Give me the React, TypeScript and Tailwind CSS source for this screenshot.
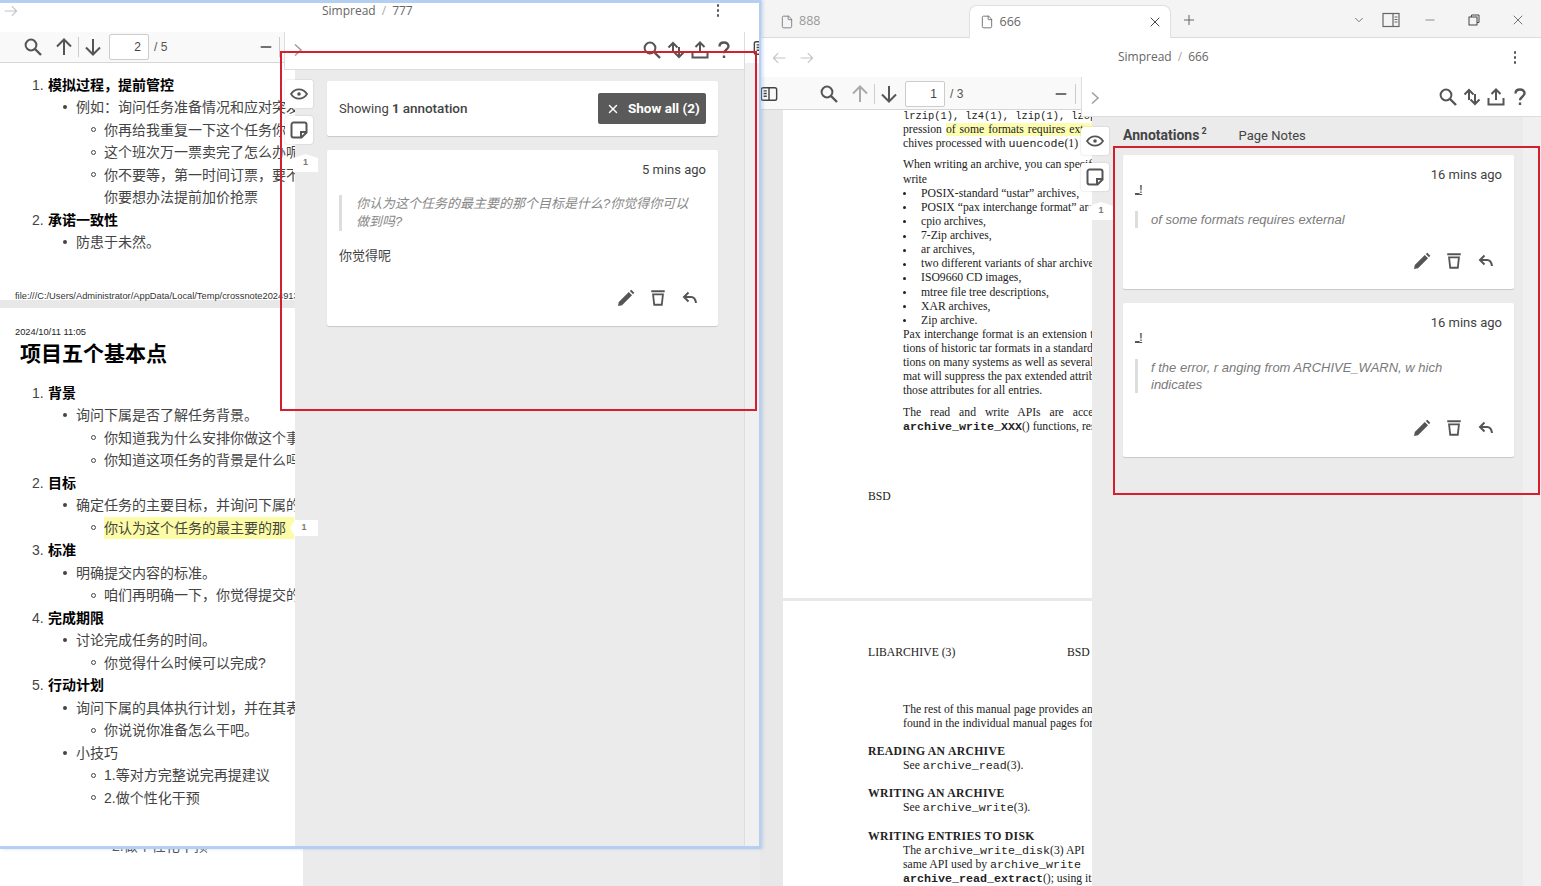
import { ChevronDown, File, Minus, Plus, X } from "lucide-react";

const cjk = "font-['Liberation_Sans','Noto_Sans_CJK_SC',sans-serif]";

function Glyph({ size = 20, color = "#555", width = 2, children }: { size?: number; color?: string; width?: number; children: React.ReactNode }) {
  return (
    <svg width={size} height={size} viewBox="0 0 20 20" fill="none" stroke={color} strokeWidth={width} className="shrink-0">
      {children}
    </svg>
  );
}

const SearchIcon = () => (
  <Glyph>
    <circle cx="8" cy="8" r="5.4" />
    <path d="M12 12l6 6" strokeWidth="2.4" />
  </Glyph>
);
const UpIcon = ({ color = "#555" }: { color?: string }) => (
  <Glyph color={color}>
    <path d="M10 18V3M3 9.5L10 2.5l7 7" />
  </Glyph>
);
const DownIcon = () => (
  <Glyph>
    <path d="M10 2v15M3 10.5l7 7 7-7" />
  </Glyph>
);
const SortIcon = () => (
  <Glyph>
    <path d="M7 13V3M2.5 7.5L7 3l4.5 4.5M13 7v10M8.5 12.5L13 17l4.5-4.5" />
  </Glyph>
);
const ShareIcon = () => (
  <Glyph>
    <path d="M10 13V3M5.5 7L10 2.5 14.500 7M2.500 11v6.500h15V11" />
  </Glyph>
);
const HelpIcon = () => (
  <Glyph width={2.4}>
    <path d="M5.500 6.500c0-2.700 2-4 4.500-4s4.500 1.400 4.500 3.800c0 3.400-4.500 3.400-4.500 7" />
    <path d="M10 15.500v2.500" />
  </Glyph>
);
const EyeIcon = () => (
  <Glyph width={1.8}>
    <path d="M2 10c2-3 4.700-4.700 8-4.700s6 1.700 8 4.700c-2 3-4.700 4.700-8 4.700S4 13 2 10z" />
    <circle cx="10" cy="10" r="1.800" fill="#555" stroke="none" />
  </Glyph>
);
const NoteIcon = () => (
  <Glyph width={2}>
    <path d="M2.500 4.500a2 2 0 012-2h11a2 2 0 012 2v8l-5 5h-8a2 2 0 01-2-2z" />
    <path d="M17.500 12h-5.500v5.500" />
  </Glyph>
);
const PanelIcon = () => (
  <Glyph size={18} color="#444" width={1.6}>
    <rect x="1.500" y="3" width="17" height="14" rx="2" />
    <path d="M10 3v14M4 6.500h3.500M4 9.500h3.500M4 12.500h3.500" />
  </Glyph>
);
const PencilIcon = () => (
  <svg width="18" height="18" viewBox="0 0 18 18" fill="#555" className="shrink-0">
    <path d="M1 17l.8-4L11.800 3l3.200 3.200-10 10zM12.800 2l1.500-1.300 3 3L16 5.200z" />
  </svg>
);
const TrashIcon = () => (
  <Glyph size={18} width={2}>
    <path d="M2.500 2.500h15" strokeWidth="2.200" />
    <path d="M4.500 6h11l-1.300 11.500H5.800z" />
  </Glyph>
);
const ReplyIcon = () => (
  <svg width="16" height="16" viewBox="0 0 16 16" fill="none" stroke="#555" strokeWidth="2" className="shrink-0">
    <path d="M6.500 2.500L2 7l4.500 4.500M2.500 7H9c3 0 4.500 2 5 6" />
  </svg>
);
const ArrowRight = ({ color = "#c4c4c4" }: { color?: string }) => (
  <Glyph size={16} color={color} width={1.400}>
    <path d="M2 10h15M11 4l6 6-6 6" />
  </Glyph>
);
const ArrowLeft = () => (
  <Glyph size={16} color="#c4c4c4" width={1.400}>
    <path d="M18 10H3M9 4l-6 6 6 6" />
  </Glyph>
);
const Dots = () => (
  <div className="flex flex-col gap-[2.500px]">
    <i className="size-[2.500px] rounded-full bg-[#555]" />
    <i className="size-[2.500px] rounded-full bg-[#555]" />
    <i className="size-[2.500px] rounded-full bg-[#555]" />
  </div>
);
const Chevron = () => (
  <svg width="10" height="14" viewBox="0 0 10 14" fill="none" stroke="#a0a0a0" strokeWidth="1.600">
    <path d="M2 1.500L8 7l-6 5.500" />
  </svg>
);

function Crumb({ name }: { name: string }) {
  return (
    <span className="block font-['Open_Sans',sans-serif] text-[12px] leading-[14px] text-[#666]">
      Simpread<span className="mx-[6px] text-[#aaa]">/</span>
      {name}
    </span>
  );
}

function PanelTools() {
  return (
    <div className="flex items-center gap-[4px]">
      <SearchIcon />
      <SortIcon />
      <ShareIcon />
      <HelpIcon />
    </div>
  );
}

function PageTools({ page, total, upColor }: { page: string; total: string; upColor?: string }) {
  return (
    <div className="flex items-center">
      <SearchIcon />
      <div className="ml-[11px]">
        <UpIcon color={upColor} />
      </div>
      <div className="mx-[4px] h-[20px] w-px bg-[#ccc]" />
      <DownIcon />
      <div className="ml-[6px] flex h-[26px] w-[40px] items-center justify-end rounded-[2px] border border-[#ccc] bg-white pr-[7px] font-['Liberation_Sans',sans-serif] text-[12px] text-[#444]">
        {page}
      </div>
      <span className="ml-[5px] font-['Liberation_Sans',sans-serif] text-[12px] text-[#555]">/ {total}</span>
    </div>
  );
}

function SideButtons({ tagTop }: { tagTop: string }) {
  return (
    <>
      <div className="flex size-[28px] items-center justify-center rounded-l-[3px] rounded-r-[2px] bg-white shadow-[0_0_2px_rgba(0,0,0,0.2)]">
        <EyeIcon />
      </div>
      <div className={`${tagTop} flex size-[28px] items-center justify-center rounded-[3px] bg-white shadow-[0_0_2px_rgba(0,0,0,0.2)]`}>
        <NoteIcon />
      </div>
    </>
  );
}

function Tag({ className, shape }: { className: string; shape: string }) {
  return (
    <div className={`absolute flex items-center justify-center bg-white font-['Liberation_Sans',sans-serif] text-[9px] font-bold text-[#777] ${shape} ${className}`}>1</div>
  );
}

function Actions() {
  return (
    <div className="flex items-center justify-end pr-[8px]">
      <PencilIcon />
      <div className="ml-[14px] mr-[15px]">
        <TrashIcon />
      </div>
      <ReplyIcon />
    </div>
  );
}

function NoteCard({ time, quote, className, actionsGap }: { time: string; quote: string[]; className: string; actionsGap: string }) {
  return (
    <div className={`rounded-[2px] bg-white px-[12px] pt-[12px] font-['Roboto',sans-serif] shadow-[0_1px_1px_rgba(0,0,0,0.15)] ${className}`}>
      <div className="text-right text-[13px] leading-[16px] text-[#3f3f3f]">{time}</div>
      <div className="mt-[1px] h-[12px] pt-[1px] text-[10px] leading-[10px] font-bold text-[#555] underline">_!</div>
      <div className="mt-[15px] border-l-[3px] border-[#ddd] pl-[13px] font-['Liberation_Sans',sans-serif] text-[13px] leading-[17px] text-[#7a7a7a] italic">
        {quote.map((line) => (
          <div key={line}>{line}</div>
        ))}
      </div>
      <div className={actionsGap}>
        <Actions />
      </div>
    </div>
  );
}

type Row = { l: number; t: string; n?: string; mark?: string };

const page1: Row[] = [
  { l: 0, n: "1.", t: "模拟过程，提前管控" },
  { l: 1, t: "例如：询问任务准备情况和应对突发状况" },
  { l: 2, t: "你再给我重复一下这个任务你打算怎么做" },
  { l: 2, t: "这个班次万一票卖完了怎么办呢" },
  { l: 2, t: "你不要等，第一时间订票，要不然" },
  { l: 3, t: "你要想办法提前加价抢票" },
  { l: 0, n: "2.", t: "承诺一致性" },
  { l: 1, t: "防患于未然。" },
];

const page2: Row[] = [
  { l: 0, n: "1.", t: "背景" },
  { l: 1, t: "询问下属是否了解任务背景。" },
  { l: 2, t: "你知道我为什么安排你做这个事吗" },
  { l: 2, t: "你知道这项任务的背景是什么吗" },
  { l: 0, n: "2.", t: "目标" },
  { l: 1, t: "确定任务的主要目标，并询问下属的" },
  { l: 2, t: "", mark: "你认为这个任务的最主要的那" },
  { l: 0, n: "3.", t: "标准" },
  { l: 1, t: "明确提交内容的标准。" },
  { l: 2, t: "咱们再明确一下，你觉得提交的" },
  { l: 0, n: "4.", t: "完成期限" },
  { l: 1, t: "讨论完成任务的时间。" },
  { l: 2, t: "你觉得什么时候可以完成?" },
  { l: 0, n: "5.", t: "行动计划" },
  { l: 1, t: "询问下属的具体执行计划，并在其表" },
  { l: 2, t: "你说说你准备怎么干吧。" },
  { l: 1, t: "小技巧" },
  { l: 2, t: "1.等对方完整说完再提建议" },
  { l: 2, t: "2.做个性化干预" },
];

function Outline({ rows }: { rows: Row[] }) {
  return (
    <div className={`${cjk} whitespace-nowrap text-[14px] leading-[22.500px] text-[#444]`}>
      {rows.map((r, i) => {
        if (r.l === 0)
          return (
            <div key={i} className="flex pl-[32px]">
              <span className="w-[16px] shrink-0">{r.n}</span>
              <b className="font-bold text-black">{r.t}</b>
            </div>
          );
        if (r.l === 1)
          return (
            <div key={i} className="flex items-center pl-[62.500px]">
              <i className="mr-[9.500px] size-[4px] shrink-0 rounded-full bg-[#444]" />
              {r.t}
            </div>
          );
        if (r.l === 3)
          return (
            <div key={i} className="pl-[104px]">
              {r.t}
            </div>
          );
        return (
          <div key={i} className="flex items-center pl-[90.500px]">
            <i className="mr-[8.500px] size-[5px] shrink-0 rounded-full border border-[#444]" />
            {r.mark ? <mark className="bg-[#fcfca6] pr-[8px] text-[#444]">{r.mark}</mark> : r.t}
          </div>
        );
      })}
    </div>
  );
}

const serif = "font-['Liberation_Serif',serif] text-[#222] text-[11.700px] leading-[14.130px] whitespace-nowrap";
const mono = "font-['Liberation_Mono',monospace] text-[11.670px]";

const formats = [
  "POSIX-standard “ustar” archives,",
  "POSIX “pax interchange format” archives,",
  "cpio archives,",
  "7-Zip archives,",
  "ar archives,",
  "two different variants of shar archives,",
  "ISO9660 CD images,",
  "mtree file tree descriptions,",
  "XAR archives,",
  "Zip archive.",
];

function ManPages() {
  return (
    <div className="flex w-[332px] shrink-0 flex-col overflow-hidden bg-[#e8e8e8] pl-[23px]">
      <div className={`${serif} h-[488px] bg-white pl-[120px]`}>
        <div className="-mt-px font-['Liberation_Mono',monospace] text-[10.400px]">
          lrzip(1), lz4(1), lzip(1), lzop(1),
        </div>
        <div className="[word-spacing:1px]">
          pression <mark className="bg-[#fdfdb0] pr-[60px] text-[#222]">of some formats requires external</mark>
        </div>
        <div>
          chives processed with <span className={mono}>uuencode</span>(1) filter.
        </div>
        <div className="mt-[7px]">When writing an archive, you can specify</div>
        <div>write</div>
        {formats.map((f) => (
          <div key={f} className="flex items-center">
            <i className="mr-[15px] size-[3px] shrink-0 rounded-full bg-[#222]" />
            {f}
          </div>
        ))}
        <div className="[word-spacing:0.5px]">Pax interchange format is an extension to the</div>
        <div>tions of historic tar formats in a standard way</div>
        <div>tions on many systems as well as several new</div>
        <div>mat will suppress the pax extended attributes</div>
        <div>those attributes for all entries.</div>
        <div className="mt-[7px] [word-spacing:6px]">The read and write APIs are accessed</div>
        <div>
          <b className={`${mono} font-bold`}>archive_write_XXX</b>() functions, respectively
        </div>
        <div className="-ml-[35px] mt-[56px]">BSD</div>
      </div>
      <div className={`${serif} mt-[3px] flex-1 bg-white pl-[85px] pt-[45px]`}>
        <div className="flex">
          <span className="w-[199px] shrink-0">LIBARCHIVE (3)</span>
          <span>BSD</span>
        </div>
        <div className="mt-[43px] pl-[35px]">
          <div>The rest of this manual page provides an overview</div>
          <div>found in the individual manual pages for each</div>
        </div>
        <b className="mt-[14px] block tracking-[0.3px]">READING AN ARCHIVE</b>
        <div className="pl-[35px]">
          See <span className={mono}>archive_read</span>(3).
        </div>
        <b className="mt-[14px] block tracking-[0.3px]">WRITING AN ARCHIVE</b>
        <div className="pl-[35px]">
          See <span className={mono}>archive_write</span>(3).
        </div>
        <b className="mt-[14px] block tracking-[0.3px]">WRITING ENTRIES TO DISK</b>
        <div className="pl-[35px]">
          <div>
            The <span className={mono}>archive_write_disk</span>(3) API
          </div>
          <div>
            same API used by <span className={mono}>archive_write</span>
          </div>
          <div>
            <b className={`${mono} font-bold`}>archive_read_extract</b>(); using it
          </div>
        </div>
      </div>
    </div>
  );
}

function LeftWindow() {
  return (
    <div className="absolute left-0 top-0 z-20 flex h-[849px] w-[761px] flex-col overflow-hidden border-y-[3px] border-r-2 border-[#b4cff2] bg-white shadow-[2px_0_3px_rgba(120,160,220,0.35)]">
      <div className="flex h-[29px] shrink-0 items-start pl-[3px]">
        <ArrowRight />
        <div className="ml-[303px] mt-[1px]">
          <Crumb name="777" />
        </div>
        <div className="ml-[304px] mt-[1px]">
          <Dots />
        </div>
      </div>
      <div className="relative z-10 flex h-[38px] shrink-0">
        <div className="flex h-[31px] w-[284px] shrink-0 items-center border-b border-[#d6d6d6] bg-[#f9f9f9] pl-[23px]">
          <PageTools page="2" total="5" />
          <Minus size={16} strokeWidth={2.500} color="#444" className="ml-[91px]" />
          <div className="ml-[5px] h-[20px] w-px bg-[#ccc]" />
        </div>
        <div className="flex w-[461px] shrink-0 items-start justify-between border-b border-l border-r border-[#dcdcdc] bg-white pl-[8px] pr-[10px] pt-[11px]">
          <Chevron />
          <div className="-mt-[3px]">
            <PanelTools />
          </div>
        </div>
        <div className="pl-[8px] pt-[7px]">
          <PanelIcon />
        </div>
      </div>
      <div className="relative -mt-[7px] flex min-h-0 flex-1">
        <div className="w-[295px] shrink-0 overflow-hidden bg-white">
          <div className="h-[237px] pt-[10.700px]">
            <Outline rows={page1} />
            <div className="mt-[36px] whitespace-nowrap pl-[15px] font-['Liberation_Sans',sans-serif] text-[9.300px] leading-[12px] text-[#333]">
              file:///C:/Users/Administrator/AppData/Local/Temp/crossnote20249137
            </div>
          </div>
          <div className="h-[8px] bg-[#e8e8e8]" />
          <div className="pt-[18px]">
            <div className="pl-[15px] font-['Liberation_Sans',sans-serif] text-[9.300px] leading-[12px] text-[#222]">2024/10/11 11:05</div>
            <h1 className={`${cjk} mt-[1px] pl-[20px] text-[21px] leading-[30px] font-bold text-black`}>项目五个基本点</h1>
            <div className="mt-[12.700px]">
              <Outline rows={page2} />
            </div>
          </div>
        </div>
        <div className="flex-1 bg-[#ebebeb] pl-[32px] pr-[26px] pt-[18px] font-['Roboto',sans-serif]">
          <div className="flex h-[55px] items-center justify-between rounded-[2px] bg-white px-[12px] shadow-[0_1px_1px_rgba(0,0,0,0.15)]">
            <span className="text-[13px] text-[#444]">
              Showing <b className="font-bold">1</b> <span className="text-[13.500px] font-medium">annotation</span>
            </span>
            <div className="flex h-[31px] w-[108px] items-center gap-[8px] rounded-[2px] bg-[#5a5a5a] pl-[8px] text-[13.500px] font-bold text-white">
              <X size={14} strokeWidth={2.500} className="shrink-0" />
              <span>Show all (2)</span>
            </div>
          </div>
          <div className="mt-[14px] h-[176px] rounded-[2px] bg-white px-[12px] pt-[12px] shadow-[0_1px_1px_rgba(0,0,0,0.15)]">
            <div className="text-right text-[13px] leading-[16px] text-[#3f3f3f]">5 mins ago</div>
            <div className={`${cjk} mt-[17px] border-l-[3px] border-[#ddd] pl-[14px] text-[13px] leading-[18px] text-[#888] italic`}>
              你认为这个任务的最主要的那个目标是什么?你觉得你可以
              <br />
              做到吗?
            </div>
            <div className={`${cjk} mt-[16px] text-[13px] leading-[18px] text-[#444]`}>你觉得呢</div>
            <div className="mt-[24px]">
              <Actions />
            </div>
          </div>
        </div>
        <div className="w-[15px] shrink-0 border-l border-[#dedede] bg-[#f0f0f0]" />
        <div className="absolute left-[285px] top-[17px] flex flex-col">
          <SideButtons tagTop="mt-[8px]" />
        </div>
        <Tag className="left-[293px] top-[91px] h-[18px] w-[25px]" shape="[clip-path:polygon(50%_0,100%_22%,100%_100%,0_100%,0_22%)]" />
        <Tag className="left-[290px] top-[457px] h-[16px] w-[28px]" shape="[clip-path:polygon(0_50%,18%_0,100%_0,100%_100%,18%_100%)]" />
      </div>
    </div>
  );
}

function TabBar() {
  return (
    <div className="flex h-[38px] shrink-0 items-end border-b border-[#dcdcdc] bg-[#f4f4f4] font-['Open_Sans',sans-serif] text-[12.500px]">
      <div className="flex h-[31px] w-[210px] items-center gap-[5px] pl-[20px] text-[#999]">
        <File size={14} strokeWidth={1.500} color="#777" />
        888
      </div>
      <div className="-mb-px flex h-[33px] w-[202px] items-center gap-[5px] rounded-t-[8px] border border-b-0 border-[#e0e0e0] bg-white pl-[10px] pr-[7px] text-[#666]">
        <File size={14} strokeWidth={1.500} color="#666" />
        666
        <X size={16} strokeWidth={1.500} color="#444" className="ml-auto" />
      </div>
      <div className="flex h-[38px] flex-1 items-center pl-[10px] pr-[15px] pt-[3px]">
        <Plus size={16} strokeWidth={1.500} color="#666" />
        <ChevronDown size={14} strokeWidth={1.500} color="#666" className="ml-[155px]" />
        <svg width="18" height="16" viewBox="0 0 18 16" fill="none" stroke="#666" strokeWidth="1.200" className="ml-[16px]">
          <rect x="1" y="1.500" width="16" height="13" />
          <path d="M11 1.500v13M12.500 5h3M12.500 7.500h3M12.500 10h3" />
        </svg>
        <Minus size={14} strokeWidth={1} color="#444" className="ml-[23px]" />
        <svg width="12" height="12" viewBox="0 0 12 12" fill="none" stroke="#444" className="ml-[31px]">
          <rect x="1" y="3" width="8" height="8" />
          <path d="M3.500 3V1h7.500v7.500H9" />
        </svg>
        <X size={16} strokeWidth={1} color="#333" className="ml-[30px]" />
      </div>
    </div>
  );
}

function RightWindow() {
  return (
    <div className="ml-[760px] flex w-[781px] flex-col">
      <TabBar />
      <div className="relative flex h-[39px] shrink-0 items-center bg-white pl-[11px] pr-[25px]">
        <ArrowLeft />
        <div className="ml-[12px]">
          <ArrowRight />
        </div>
        <div className="-mt-[1px] ml-[303px]">
          <Crumb name="666" />
        </div>
        <div className="ml-auto">
          <Dots />
        </div>
      </div>
      <div className="relative z-10 flex h-[40px] shrink-0">
        <div className="flex h-[33px] w-[321px] shrink-0 items-center border-b border-[#d6d6d6] bg-[#f9f9f9] pt-[1px]">
          <PanelIcon />
          <div className="ml-[41px]">
            <PageTools page="1" total="3" upColor="#aaa" />
          </div>
          <Minus size={16} strokeWidth={2.500} color="#444" className="ml-[90px]" />
          <div className="ml-[6px] h-[20px] w-px bg-[#ccc]" />
        </div>
        <div className="flex flex-1 items-start justify-between border-b border-l border-[#dcdcdc] bg-white pl-[8px] pr-[11px] pt-[14px]">
          <Chevron />
          <div className="-mt-[4px]">
            <PanelTools />
          </div>
        </div>
      </div>
      <div className="relative -mt-[7px] flex min-h-0 flex-1 overflow-hidden">
        <ManPages />
        <div className="flex-1 bg-[#ebebeb] pl-[31px] pr-[9px] pt-[7px] font-['Roboto',sans-serif]">
          <div className="flex h-[38px] items-center pb-[1px] text-[#444]">
            <b className="text-[14px] font-bold">Annotations</b>
            <sup className="ml-[2px] text-[9px] font-bold">2</sup>
            <span className="ml-[32px] text-[13px]">Page Notes</span>
          </div>
          <NoteCard
            className="h-[134px]"
            time="16 mins ago"
            quote={["of some formats requires external"]}
            actionsGap="mt-[24px]"
          />
          <NoteCard
            className="mt-[14px] h-[154px]"
            time="16 mins ago"
            quote={["f the error, r anging from ARCHIVE_WARN, w hich", "indicates"]}
            actionsGap="mt-[26px]"
          />
        </div>
        <div className="w-[18px] shrink-0 bg-[#f0f0f0]" />
        <div className="absolute left-[321px] top-[17px] flex flex-col">
          <SideButtons tagTop="mt-[8px]" />
        </div>
        <Tag className="left-[329px] top-[92px] h-[18px] w-[24px]" shape="[clip-path:polygon(50%_0,100%_22%,100%_100%,0_100%,0_22%)]" />
      </div>
    </div>
  );
}

export default function App() {
  return (
    <div className="relative flex h-[886px] w-[1541px] overflow-hidden bg-white">
      <div className="absolute inset-y-0 left-0 flex w-[762px]">
        <div className={`${cjk} w-[303px] overflow-hidden whitespace-nowrap bg-white pl-[112px] pt-[835px] text-[14px] leading-[22px] text-[#555]`}>2.做个性化干预</div>
        <div className="flex-1 bg-[#ebebeb]" />
      </div>
      <LeftWindow />
      <RightWindow />
      <div className="absolute left-[280px] top-[51px] z-30 h-[360px] w-[477px] border-2 border-[#d3202c]" />
      <div className="absolute left-[1113px] top-[146px] z-30 h-[349px] w-[427px] border-2 border-[#d3202c]" />
    </div>
  );
}
